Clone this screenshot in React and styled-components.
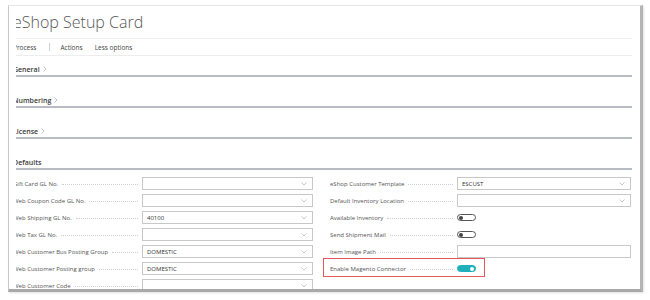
import React from "react";
import styled, { createGlobalStyle } from "styled-components";

const GlobalStyle = createGlobalStyle`
  html, body {
    margin: 0;
    padding: 0;
    background: #ffffff;
    font-family: "Open Sans", "Noto Sans", "Liberation Sans", sans-serif;
  }
`;

const Page = styled.div`
  width: 650px;
  height: 300px;
  padding: 5px 0 0 8px;
  box-sizing: border-box;
`;

const Card = styled.div`
  width: 635px;
  height: 287px;
  box-sizing: border-box;
  background: #fff;
  border-top: 1px solid #e8e8e8;
  border-left: 1px solid #c9c9c9;
  border-right: 3px solid #b4b4b4;
  border-bottom: 3px solid #a9a9a9;
  box-shadow: 1px 1px 2px rgba(0, 0, 0, 0.12);
  padding-left: 7px;
  overflow: hidden;
`;

const Viewport = styled.div`
  width: 616px;
  height: 100%;
  overflow: hidden;
`;

const Content = styled.div`
  margin-left: -3px;
`;

const Title = styled.div`
  height: 32px;
  line-height: 32px;
  padding-left: 0;
  font-size: 16px;
  font-weight: 300;
  color: #575757;
  white-space: nowrap;
`;

const Divider = styled.div`
  height: 1px;
  background: #ededed;
  margin-left: 3px;
`;

const Toolbar = styled.div`
  height: 16px;
  display: flex;
  align-items: center;
  font-size: 6.5px;
  color: #444;
`;

const ToolItem = styled.span`
  margin-right: ${(p) => p.$gap || 12}px;
  white-space: nowrap;
`;

const ToolSep = styled.span`
  width: 1px;
  height: 8px;
  background: #cfcfcf;
  margin-right: 10px;
`;

const Section = styled.div`
  margin-top: ${(p) => (p.$first ? 7 : 17)}px;
  display: flex;
  align-items: center;
  height: 12px;
  border-bottom: 2px solid #b9bdc3;
  font-size: 7px;
  font-weight: 600;
  color: #3a3a3a;
`;

const Chevron = styled.svg`
  margin-left: 3px;
  width: 4px;
  height: 6px;
`;

const Grid = styled.div`
  margin-top: 7px;
  display: grid;
  grid-template-columns: 300px 301px;
  column-gap: 17px;
  align-items: start;
`;

const Column = styled.div`
  display: flex;
  flex-direction: column;
  gap: 4px;
`;

const Row = styled.div`
  position: relative;
  display: grid;
  grid-template-columns: ${(p) => p.$labelWidth}px 1fr;
  height: 13px;
  align-items: center;

  ${(p) =>
    p.$highlight &&
    `
    &::after {
      content: "";
      position: absolute;
      left: -7px;
      top: -4px;
      width: 162px;
      height: 19px;
      box-sizing: border-box;
      border: 1.5px solid #e4575b;
    }
  `}
`;

const Label = styled.div`
  display: flex;
  align-items: center;
  font-size: 6px;
  color: #555;
  white-space: nowrap;
  padding-right: 4px;
  overflow: hidden;
`;

const Leader = styled.span`
  flex: 1;
  margin-left: 4px;
  margin-top: 2px;
  border-bottom: 1px dotted #cfcfcf;
`;

const Field = styled.div`
  height: 13px;
  box-sizing: border-box;
  border: 1px solid #c8c8c8;
  background: #fff;
  display: flex;
  align-items: center;
  justify-content: space-between;
  padding: 0 5px 0 4px;
  font-size: 6px;
  color: #333;
`;

const Toggle = styled.div`
  position: relative;
  width: 19px;
  height: 7px;
  border-radius: 4px;
  box-sizing: border-box;
  border: 1px solid ${(p) => (p.$on ? "#1fb0bb" : "#555")};
  background: ${(p) => (p.$on ? "#1fb0bb" : "#fff")};

  &::before {
    content: "";
    position: absolute;
    top: 0.5px;
    ${(p) => (p.$on ? "right: 1px;" : "left: 1px;")}
    width: 4px;
    height: 4px;
    border-radius: 50%;
    background: ${(p) => (p.$on ? "#fff" : "#444")};
  }
`;

const DropArrow = () => (
  <svg width="6" height="4" viewBox="0 0 6 4">
    <polyline points="0.5,0.5 3,3 5.5,0.5" fill="none" stroke="#b0b0b0" strokeWidth="0.7" />
  </svg>
);

const SectionHead = ({ title, first, chevron = true }) => (
  <Section $first={first}>
    {title}
    {chevron && (
      <Chevron viewBox="0 0 4 6">
        <polyline points="0.5,0.5 3,3 0.5,5.5" fill="none" stroke="#9a9a9a" strokeWidth="0.6" />
      </Chevron>
    )}
  </Section>
);

const leftRows = [
  { label: "Gift Card GL No.", type: "select" },
  { label: "Web Coupon Code GL No.", type: "select" },
  { label: "Web Shipping GL No.", type: "select", value: "40100" },
  { label: "Web Tax GL No.", type: "select" },
  { label: "Web Customer Bus Posting Group", type: "select", value: "DOMESTIC" },
  { label: "Web Customer Posting group", type: "select", value: "DOMESTIC" },
  { label: "Web Customer Code", type: "select" },
];

const rightRows = [
  { label: "eShop Customer Template", type: "select", value: "ESCUST" },
  { label: "Default Inventory Location", type: "select" },
  { label: "Available Inventory", type: "toggle" },
  { label: "Send Shipment Mail", type: "toggle" },
  { label: "Item Image Path", type: "text" },
  { label: "Enable Magento Connector", type: "toggle", on: true, highlight: true },
];

const FieldRow = ({ row, labelWidth }) => (
  <Row $labelWidth={labelWidth} $highlight={row.highlight}>
    <Label>
      {row.label}
      <Leader />
    </Label>
    {row.type === "toggle" ? (
      <Toggle $on={row.on} />
    ) : (
      <Field>
        <span>{row.value || ""}</span>
        {row.type === "select" && <DropArrow />}
      </Field>
    )}
  </Row>
);

const App = () => {
  return (
    <>
      <GlobalStyle />
      <Page>
        <Card>
          <Viewport>
            <Content>
              <Title>eShop Setup Card</Title>
              <Divider />
              <Toolbar>
                <ToolItem $gap={13}>Process</ToolItem>
                <ToolSep />
                <ToolItem>Actions</ToolItem>
                <ToolItem>Less options</ToolItem>
              </Toolbar>
              <Divider />
              <SectionHead title="General" first />
              <SectionHead title="Numbering" />
              <SectionHead title="License" />
              <SectionHead title="Defaults" chevron={false} />
              <Grid>
                <Column>
                  {leftRows.map((r) => (
                    <FieldRow key={r.label} row={r} labelWidth={129} />
                  ))}
                </Column>
                <Column>
                  {rightRows.map((r) => (
                    <FieldRow key={r.label} row={r} labelWidth={127} />
                  ))}
                </Column>
              </Grid>
            </Content>
          </Viewport>
        </Card>
      </Page>
    </>
  );
};

export default App;
